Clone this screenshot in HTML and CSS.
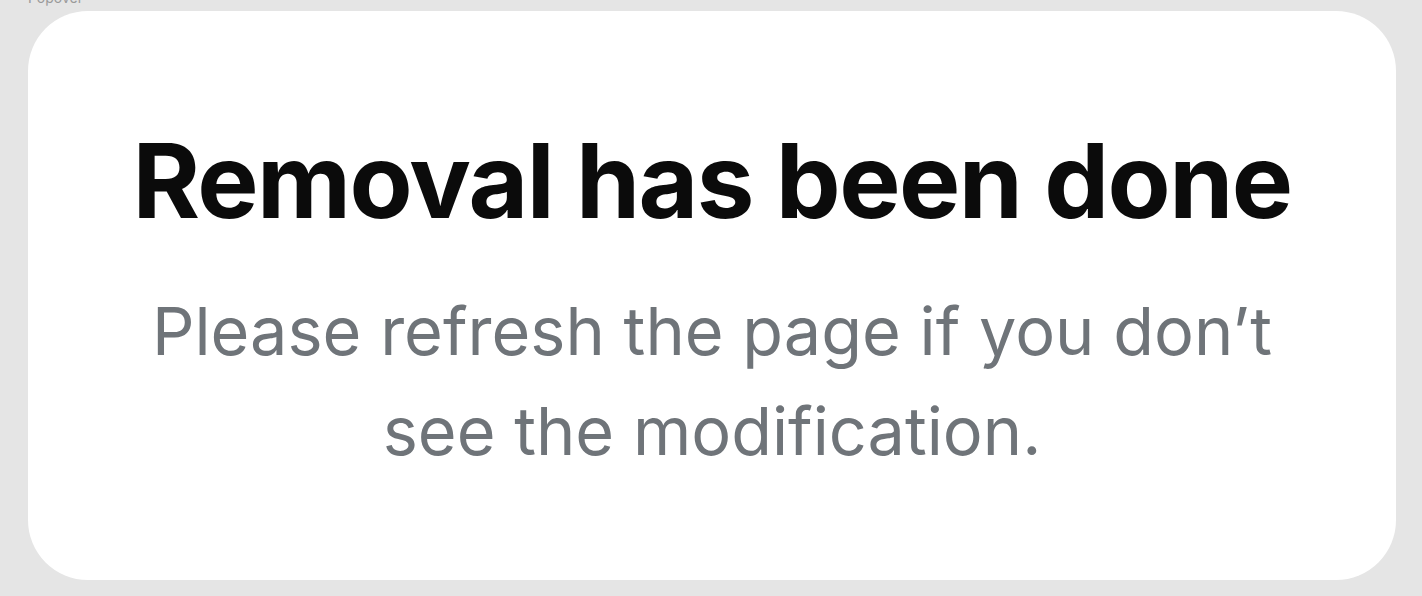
FILE: index.html
```html
<!DOCTYPE html>
<html lang="en">
<head>
<meta charset="utf-8">
<title>Popover</title>
<link rel="stylesheet" href="styles.css">
</head>
<body>
<div class="frame-label">Popover</div>
<div class="popover">
  <h1 class="title">Removal has been done</h1>
  <p class="message">Please refresh the page if you don’t see the modification.</p>
</div>
</body>
</html>
```

FILE: styles.css
```css
html, body {
  margin: 0;
  padding: 0;
}
body {
  background: #e5e5e5;
  width: 1422px;
  height: 596px;
  overflow: hidden;
  font-family: Inter, "Noto Sans", sans-serif;
  padding: 0 26px 0 28px;
  box-sizing: border-box;
}
.frame-label {
  font-size: 14px;
  line-height: 14px;
  height: 14px;
  margin-top: -9px;
  color: #9a9a9a;
}
.popover {
  margin-top: 6px;
  height: 569px;
  background: #ffffff;
  border-radius: 60px;
  display: flex;
  flex-direction: column;
  align-items: center;
  justify-content: center;
  text-align: center;
  box-sizing: border-box;
  padding: 8px 40px 0;
}
.title {
  margin: 0;
  font-size: 103px;
  font-weight: 700;
  line-height: 124px;
  letter-spacing: -1.55px;
  color: #0b0b0b;
  white-space: nowrap;
}
.message {
  margin: 38px 0 0;
  font-size: 66.6px;
  font-weight: 400;
  line-height: 100px;
  color: #6f7479;
  max-width: 1150px;
}
```
